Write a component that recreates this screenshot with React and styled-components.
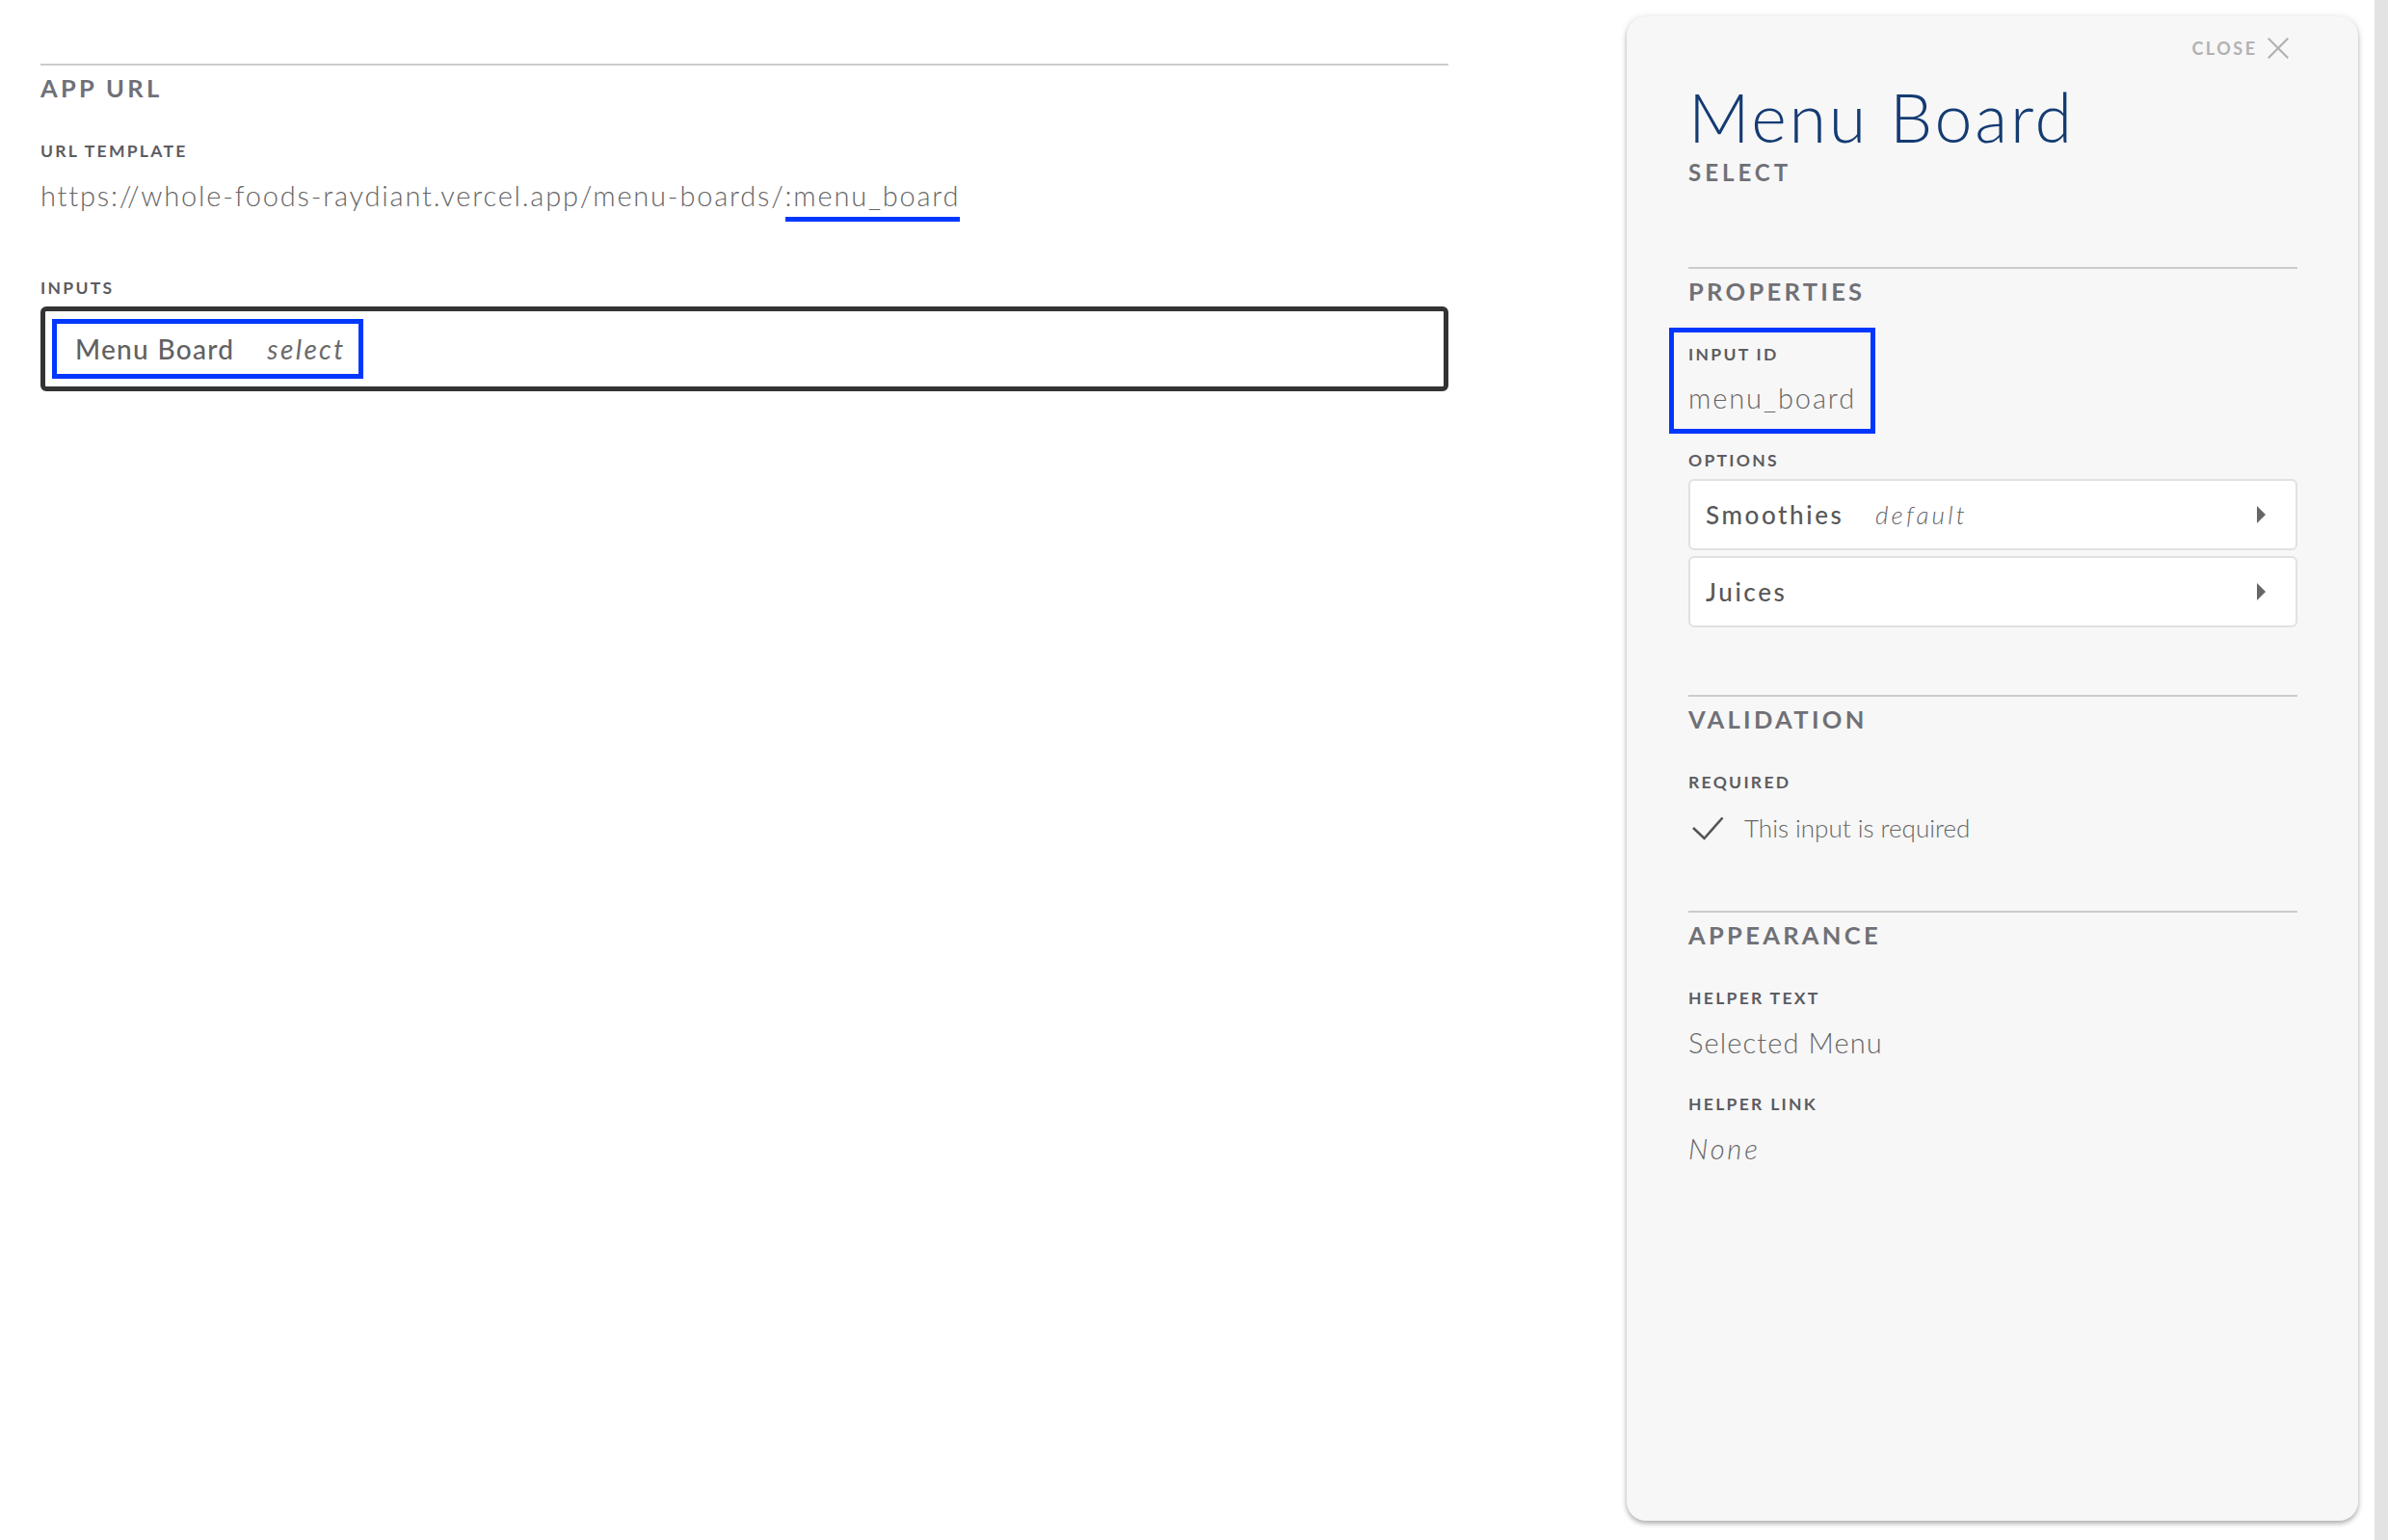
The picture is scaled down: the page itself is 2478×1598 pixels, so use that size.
import React from "react";
import styled, { createGlobalStyle } from "styled-components";

const GlobalStyle = createGlobalStyle`
  html, body { margin: 0; padding: 0; background: #ffffff; }
  body { font-family: Lato, "Open Sans", sans-serif; }
  * { box-sizing: border-box; }
`;

const Page = styled.div`
  display: flex;
  width: 2478px;
  height: 1598px;
  overflow: hidden;
  background: #ffffff;
`;

const Main = styled.main`
  width: 1461px;
  margin-left: 42px;
  display: flex;
  flex-direction: column;
`;

const Divider = styled.div`
  height: 2px;
  background: #cbcbcb;
  margin-top: ${(p) => p.$top || 0}px;
`;

const SectionHeading = styled.h2`
  margin: ${(p) => (p.$top ?? 9.5)}px 0 0;
  font-size: 25.5px;
  line-height: 26px;
  font-weight: 700;
  letter-spacing: 3.3px;
  color: #707076;
  text-transform: uppercase;
`;

const FieldLabel = styled.div`
  margin-top: ${(p) => p.$top ?? 0}px;
  font-size: 17.5px;
  line-height: 18px;
  font-weight: 700;
  letter-spacing: 2.3px;
  color: #5c5c61;
  text-transform: uppercase;
`;

const Value = styled.div`
  margin-top: 18.6px;
  font-size: 29px;
  line-height: 36px;
  font-weight: 300;
  letter-spacing: ${(p) => p.$ls ?? 1.5}px;
  color: #666666;
  font-style: ${(p) => (p.$italic ? "italic" : "normal")};
  white-space: nowrap;
`;

const Param = styled.span`
  padding-bottom: 5px;
  border-bottom: 5px solid #0037ff;
`;

const InputBox = styled.div`
  margin-top: 9.8px;
  height: 88px;
  border: 5px solid #333333;
  border-radius: 6px;
  padding: 8px 7px;
  display: flex;
  align-items: stretch;
`;

const Chip = styled.div`
  display: flex;
  align-items: center;
  gap: 34px;
  border: 5px solid #0037ff;
  padding: 0 13px 0 19px;
  font-size: 28px;
  line-height: 52px;
  color: #626262;
`;

const ChipName = styled.span`
  font-weight: 500;
  letter-spacing: 1.3px;
`;

const ChipType = styled.span`
  font-style: italic;
  font-weight: 400;
  letter-spacing: 2.4px;
  color: #6a6a6a;
`;

const Aside = styled.aside`
  margin-left: auto;
  margin-top: 17px;
  width: 759px;
  height: 1561px;
  border-radius: 20px;
  background: #f7f7f7;
  box-shadow: 0 3px 5px rgba(0, 0, 0, 0.28), 0 0 10px rgba(0, 0, 0, 0.08);
  padding: 0 63px 0 64px;
  display: flex;
  flex-direction: column;
`;

const Scrollbar = styled.div`
  width: 14px;
  height: 100%;
  margin-left: 17px;
  background: #e3e3e3;
`;

const CloseRow = styled.button`
  align-self: flex-end;
  margin: 22px 9px 0 0;
  padding: 0;
  border: none;
  background: none;
  display: flex;
  align-items: center;
  gap: 10.5px;
  cursor: pointer;
  font-family: inherit;
  font-size: 18px;
  line-height: 22px;
  font-weight: 700;
  letter-spacing: 2.5px;
  color: #b2b2b2;
`;

const Title = styled.h1`
  margin: 25px 0 0;
  font-size: 70px;
  line-height: 70px;
  font-weight: 300;
  letter-spacing: 2.8px;
  color: #143b73;
  white-space: nowrap;
`;

const Subtitle = styled.div`
  margin-top: 10.8px;
  font-size: 24px;
  line-height: 24px;
  font-weight: 700;
  letter-spacing: 4px;
  color: #707076;
`;

const Highlight = styled.div`
  align-self: flex-start;
  margin: 25.9px 0 0 -20px;
  border: 5px solid #0037ff;
  padding: 13.2px 15px 14.2px 15px;
`;

const OptionList = styled.div`
  margin-top: 10.8px;
  display: flex;
  flex-direction: column;
  gap: 6px;
`;

const OptionRow = styled.div`
  height: 74px;
  border: 2px solid #e1e1e1;
  border-radius: 6px;
  background: #ffffff;
  display: flex;
  align-items: center;
  padding: 0 31px 0 16px;
  font-size: 26px;
  line-height: 30px;
  color: #585858;
`;

const OptionName = styled.span`
  font-weight: 500;
  letter-spacing: 2.6px;
`;

const OptionTag = styled.span`
  margin-left: 32.5px;
  font-style: italic;
  font-weight: 300;
  letter-spacing: 3.2px;
  color: #666666;
`;

const Caret = styled.svg`
  margin-left: auto;
  width: 9px;
  height: 18px;
  fill: #666666;
`;

const CheckRow = styled.div`
  margin-top: 22.8px;
  display: flex;
  align-items: center;
  gap: 21px;
  font-size: 26px;
  line-height: 30px;
  font-weight: 300;
  color: #666666;
`;

const CheckSvg = styled.svg`
  margin-left: 3px;
  flex: none;
`;

function CloseIcon() {
  return (
    <svg width="22" height="22" viewBox="0 0 22 22" fill="none" stroke="#b2b2b2" strokeWidth="2.2" strokeLinecap="square">
      <line x1="1.5" y1="1.5" x2="20.5" y2="20.5" />
      <line x1="20.5" y1="1.5" x2="1.5" y2="20.5" />
    </svg>
  );
}

function CheckIcon() {
  return (
    <CheckSvg width="34" height="25" viewBox="0 0 34 25" fill="none" stroke="#555555" strokeWidth="2.6" strokeLinejoin="miter">
      <polyline points="2,12 13.5,23 32.5,1.5" />
    </CheckSvg>
  );
}

function Option({ name, tag }) {
  return (
    <OptionRow>
      <OptionName>{name}</OptionName>
      {tag && <OptionTag>{tag}</OptionTag>}
      <Caret viewBox="0 0 9 18">
        <polygon points="0,0 9,9 0,18" />
      </Caret>
    </OptionRow>
  );
}

export default function App() {
  return (
    <>
      <GlobalStyle />
      <Page>
        <Main>
          <Divider $top={66} />
          <SectionHeading $top={10}>App URL</SectionHeading>
          <FieldLabel $top={44.4}>URL Template</FieldLabel>
          <Value $ls={1.8}>
            https://whole-foods-raydiant.vercel.app/menu-boards/<Param>:menu_board</Param>
          </Value>
          <FieldLabel $top={69.4}>Inputs</FieldLabel>
          <InputBox>
            <Chip>
              <ChipName>Menu Board</ChipName>
              <ChipType>select</ChipType>
            </Chip>
          </InputBox>
        </Main>

        <Aside>
          <CloseRow>
            CLOSE
            <CloseIcon />
          </CloseRow>
          <Title>Menu Board</Title>
          <Subtitle>SELECT</Subtitle>

          <Divider $top={86.3} />
          <SectionHeading>Properties</SectionHeading>
          <Highlight>
            <FieldLabel>Input ID</FieldLabel>
            <Value $ls={1.9}>menu_board</Value>
          </Highlight>
          <FieldLabel $top={18.2}>Options</FieldLabel>
          <OptionList>
            <Option name="Smoothies" tag="default" />
            <Option name="Juices" />
          </OptionList>

          <Divider $top={70} />
          <SectionHeading>Validation</SectionHeading>
          <FieldLabel $top={44.4}>Required</FieldLabel>
          <CheckRow>
            <CheckIcon />
            This input is required
          </CheckRow>

          <Divider $top={71} />
          <SectionHeading>Appearance</SectionHeading>
          <FieldLabel $top={44.4}>Helper Text</FieldLabel>
          <Value $ls={1.1}>Selected Menu</Value>
          <FieldLabel $top={37.4}>Helper Link</FieldLabel>
          <Value $italic $ls={2.8}>None</Value>
        </Aside>
        <Scrollbar />
      </Page>
    </>
  );
}
